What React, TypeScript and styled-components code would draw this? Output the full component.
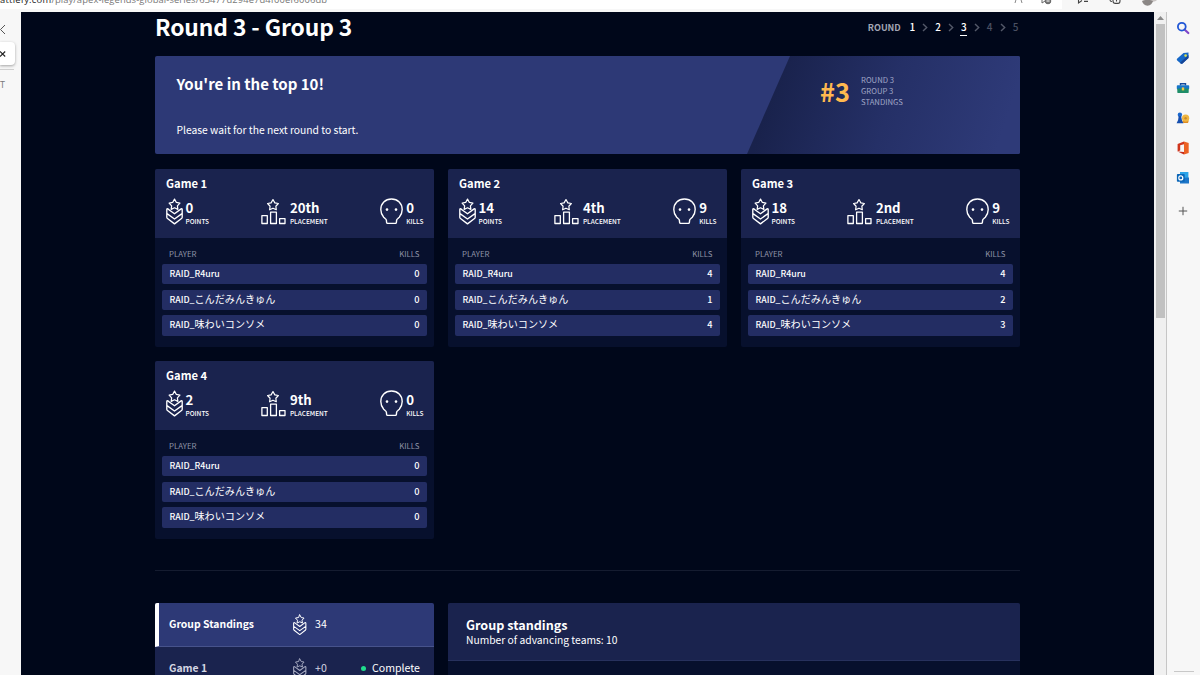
import React from "react";
import styled, { createGlobalStyle } from "styled-components";

const GlobalStyle = createGlobalStyle`
  * { box-sizing: border-box; }
  html, body { margin: 0; padding: 0; }
  body {
    width: 1200px;
    height: 675px;
    overflow: hidden;
    background: #f7f7f7;
    font-family: "Noto Sans CJK JP", "Noto Sans", sans-serif;
    color: #fff;
  }
`;

const Browser = styled.div`
  width: 1200px;
  height: 675px;
  display: flex;
  flex-direction: column;
  overflow: hidden;
`;

const TopBar = styled.div`
  height: 12px;
  flex: none;
  display: flex;
  overflow: hidden;
  background: #f7f7f7;
`;

const AddressBar = styled.div`
  width: 1062px;
  height: 9px;
  display: flex;
  justify-content: space-between;
  align-items: flex-end;
  background: #fff;
  overflow: hidden;
`;

const Url = styled.div`
  font: 9.4px/14px "Open Sans", sans-serif;
  letter-spacing: 0.1px;
  color: #777;
  height: 14px;
  margin: 0 0 2px -6px;
  white-space: nowrap;
  b { font-weight: 400; color: #222; letter-spacing: 0.25px; }
`;

const AddressIcons = styled.div`
  display: flex;
  gap: 18px;
  padding-right: 9px;
  height: 9px;
`;

const ToolIcons = styled.div`
  display: flex;
  gap: 20px;
  padding-left: 14px;
  height: 9px;
`;

const Body = styled.div`
  flex: 1;
  min-height: 0;
  display: flex;
`;

const TabStrip = styled.div`
  width: 21px;
  flex: none;
  display: flex;
  flex-direction: column;
  background: #f7f7f7;
  color: #555;
  overflow: hidden;
`;

const Collapse = styled.div`
  height: 30px;
  padding-top: 12px;
  svg { display: block; }
`;

const ActiveTab = styled.div`
  width: 15px;
  height: 23px;
  display: flex;
  align-items: center;
  background: #fff;
  border-radius: 0 4px 4px 0;
  box-shadow: 0 1px 3px rgba(0, 0, 0, 0.35);
`;

const TabLetter = styled.div`
  margin-top: 4px;
  width: 14px;
  padding-top: 9px;
  border-top: 1px solid #cfcfcf;
  font: 9px/12px "Open Sans", sans-serif;
  color: #777;
`;

const Page = styled.main`
  width: 1133px;
  flex: none;
  background: #00071a;
  overflow: hidden;
`;

const Content = styled.div`
  width: 865px;
  margin-left: 134px;
`;

const TitleRow = styled.header`
  height: 44px;
  display: flex;
  justify-content: space-between;
  align-items: flex-start;
`;

const Title = styled.h1`
  margin: 0;
  font-size: 22.8px;
  font-weight: 700;
  line-height: 30px;
  letter-spacing: -0.1px;
  white-space: nowrap;
`;

const Rounds = styled.nav`
  display: flex;
  align-items: center;
  height: 20px;
  margin: 5px 1px 0 0;
  font-size: 10px;
`;

const RoundsLabel = styled.span`
  font-weight: 700;
  font-size: 9px;
  width: 41px;
  color: #a3a6b4;
`;

const RoundNumber = styled.span<{ $state?: "active" | "future" }>`
  width: 7px;
  text-align: center;
  line-height: 14px;
  height: 15px;
  font-weight: 500;
  color: ${(p) => (p.$state === "future" ? "#4a5062" : "#fff")};
  box-shadow: ${(p) => (p.$state === "active" ? "0 1px 0 #fff" : "none")};
`;

const RoundGap = styled.span`
  width: 18.8px;
  display: flex;
  justify-content: center;
`;

const Banner = styled.section`
  height: 98px;
  display: flex;
  justify-content: space-between;
  background: #2d3976;
  border-radius: 2px;
  overflow: hidden;
`;

const BannerText = styled.div`
  padding: 16px 0 0 21.5px;
`;

const BannerTitle = styled.h2`
  margin: 0;
  font-size: 15px;
  font-weight: 700;
  line-height: 24px;
`;

const BannerNote = styled.p`
  margin: 25px 0 0;
  font-size: 10.3px;
  line-height: 18px;
`;

const RankPanel = styled.div`
  width: 273px;
  display: flex;
  padding: 19px 0 0 73px;
  clip-path: polygon(43px 0, 100% 0, 100% 100%, 0 100%);
  background: linear-gradient(108deg, #19224c 12%, #253067 52%, #2e3a78 92%);
`;

const Rank = styled.div`
  width: 41px;
  font-size: 25.4px;
  font-weight: 700;
  line-height: 32px;
  color: #ffb94f;
`;

const RankLabel = styled.div`
  font-size: 7.7px;
  line-height: 10.9px;
  color: #a0a6c6;
`;

const Games = styled.section`
  display: grid;
  grid-template-columns: repeat(3, 279px);
  gap: 14.4px 14px;
  margin-top: 15px;
`;

const Card = styled.article`
  height: 177.6px;
  background: #07102d;
  border-radius: 2px;
  overflow: hidden;
`;

const CardHeader = styled.div`
  height: 69px;
  padding: 6px 10.5px 0 10.5px;
  background: #1a234e;
`;

const CardTitle = styled.h3`
  margin: 0 0 0 0.5px;
  font-size: 11.2px;
  font-weight: 700;
  line-height: 16px;
`;

const Stats = styled.div`
  display: flex;
  justify-content: space-between;
  margin-top: 7px;
`;

const Stat = styled.div<{ $gap: number }>`
  display: flex;
  gap: ${(p) => p.$gap}px;
`;

const StatText = styled.div`
  padding-top: 2px;
`;

const StatValue = styled.div`
  font-size: 13.2px;
  font-weight: 700;
  line-height: 15px;
`;

const StatLabel = styled.div`
  font-size: 6.5px;
  font-weight: 500;
  line-height: 10px;
  margin-top: 1px;
`;

const Players = styled.div`
  padding: 9px 7px 0;
`;

const PlayerHead = styled.div`
  display: flex;
  justify-content: space-between;
  padding: 0 7.5px 0 7px;
  font-size: 7.8px;
  line-height: 14px;
  color: #8f93a6;
`;

const PlayerRow = styled.div`
  display: flex;
  align-items: baseline;
  justify-content: space-between;
  height: 20.5px;
  margin: 2.7px 0 5.4px;
  padding: 0 7.5px;
  line-height: 19.4px;
  font-size: 9.2px;
  font-weight: 500;
  background: #232d63;
  border-radius: 2px;
  & + & { margin-top: 0; }
`;

const PlayerName = styled.span`
  font-size: 8.8px;
`;

const Kana = styled.span`
  font-size: 10.1px;
  line-height: 1;
  font-weight: 400;
`;

const Divider = styled.hr`
  height: 1px;
  margin: 31.4px 0 32px;
  border: 0;
  background: #151c30;
`;

const Lower = styled.section`
  display: flex;
  gap: 14px;
`;

const Menu = styled.div`
  width: 279px;
  border-radius: 2px 2px 0 0;
  overflow: hidden;
`;

const MenuItem = styled.div<{ $active?: boolean }>`
  display: grid;
  grid-template-columns: 124px 22px 44px 1fr;
  align-items: center;
  height: 44px;
  padding: 0 14px 0 ${(p) => (p.$active ? 10 : 14)}px;
  background: ${(p) => (p.$active ? "#2d3976" : "#1a234e")};
  border-left: ${(p) => (p.$active ? "4px solid #fff" : "0")};
  border-bottom: 1px solid #47538c;
  font-size: 10.6px;
  line-height: 20px;
  color: ${(p) => (p.$active ? "#fff" : "#d3d5e2")};
  white-space: nowrap;
`;

const MenuName = styled.span`
  font-size: 10.4px;
  font-weight: 700;
`;

const Status = styled.span`
  display: flex;
  align-items: center;
  justify-content: flex-end;
  gap: 6px;
  color: #fff;
  &::before {
    content: "";
    width: 5px;
    height: 5px;
    border-radius: 50%;
    background: #1fdc8c;
  }
`;

const Standings = styled.div`
  width: 572px;
  height: 100px;
  background: #07102d;
  border-radius: 2px 2px 0 0;
  overflow: hidden;
`;

const StandingsHeader = styled.div`
  height: 58px;
  padding: 13px 18px 0;
  background: #1a234e;
  border-bottom: 1px solid #27315d;
`;

const StandingsTitle = styled.h2`
  margin: 0;
  font-size: 12.6px;
  font-weight: 700;
  line-height: 18px;
`;

const StandingsNote = styled.div`
  font-size: 10.3px;
  line-height: 11px;
`;

const Scrollbar = styled.div`
  width: 13px;
  flex: none;
  display: flex;
  flex-direction: column;
  align-items: center;
  background: #f0f0f0;
  border-right: 1px solid #c6c6c6;
`;

const ScrollUp = styled.div`
  height: 12px;
  display: flex;
  align-items: center;
`;

const Thumb = styled.div`
  width: 9px;
  height: 294px;
  background: #c1c1c1;
`;

const SideBar = styled.aside`
  flex: 1;
  display: flex;
  flex-direction: column;
  justify-content: space-between;
  align-items: center;
  background: #f7f7f7;
`;

const SideIcons = styled.div`
  display: flex;
  flex-direction: column;
  align-items: center;
  gap: 16.1px;
  padding: 9px 1px 0 0;
  svg { display: block; }
  svg:last-child { margin-top: 2.5px; }
`;

const SideRule = styled.div`
  width: 20px;
  height: 1px;
  margin-bottom: 3px;
  background: #c8c8c8;
`;

const star = "M9 1 L11 4.6 L14.8 5.3 L12.1 8.2 L12.6 12 L9 10.3 L5.4 12 L5.9 8.2 L3.2 5.3 L7 4.6 Z";

function PointsIcon({ size = 17, color = "#fff" }: { size?: number; color?: string }) {
  return (
    <svg width={size} height={(size * 27) / 17} viewBox="0 0 17 27" fill="none" stroke={color} strokeWidth="1.35" strokeLinejoin="round" strokeLinecap="round">
      <path d={star} transform="translate(.15 .2) scale(.93)" />
      <path d="M3.6 12.2 L1.9 10.9 Q.8 10.4 .8 11.7 V19.2 Q.8 20 1.5 20.5 L8.5 25.9 L15.5 20.5 Q16.2 20 16.2 19.2 V11.7 Q16.2 10.4 15.1 10.9 L8.5 15.8 L3.6 12.2 M1 15.6 L8.5 21 L16 15.6" />
    </svg>
  );
}

function PlacementIcon() {
  return (
    <svg width="25" height="27" viewBox="0 0 25 27" fill="none" stroke="#fff" strokeWidth="1.3" strokeLinejoin="round">
      <path d={star} transform="translate(3.6 .6) scale(.93)" />
      <rect x="0.9" y="17.6" width="5.4" height="7.9" />
      <rect x="9.6" y="14.2" width="5.8" height="11.3" />
      <rect x="18.6" y="20.6" width="5.4" height="4.9" />
    </svg>
  );
}

function SkullIcon() {
  return (
    <svg width="23" height="27" viewBox="0 0 23 27" fill="none" stroke="#fff" strokeWidth="1.4" strokeLinejoin="round">
      <path d="M7.6 25.4 Q6.7 25.4 6.6 24.4 L6.4 22.4 Q6.3 21.4 5.4 20.7 L3.7 19.2 C1.8 17 .8 14.6 .8 11.5 C.8 5.2 5.2 1 11.5 1 S22.2 5.2 22.2 11.5 C22.2 14.6 21.2 17 19.3 19.2 L17.6 20.7 Q16.7 21.4 16.6 22.4 L16.4 24.4 Q16.3 25.4 15.4 25.4 Z" />
      <circle cx="7" cy="11.6" r="1.3" fill="#fff" stroke="none" />
      <circle cx="16" cy="11.6" r="1.3" fill="#fff" stroke="none" />
    </svg>
  );
}

interface Game {
  name: string;
  points: number;
  place: string;
  total: number;
  kills: number[];
}

const team = "RAID_";

const players = [
  { latin: "R4uru", kana: "" },
  { latin: "", kana: "こんだみんきゅん" },
  { latin: "", kana: "味わいコンソメ" },
];

const games: Game[] = [
  { name: "Game 1", points: 0, place: "20th", total: 0, kills: [0, 0, 0] },
  { name: "Game 2", points: 14, place: "4th", total: 9, kills: [4, 1, 4] },
  { name: "Game 3", points: 18, place: "2nd", total: 9, kills: [4, 2, 3] },
  { name: "Game 4", points: 2, place: "9th", total: 0, kills: [0, 0, 0] },
];

function StatBlock({ icon, value, label, gap }: { icon: React.ReactNode; value: React.ReactNode; label: string; gap: number }) {
  return (
    <Stat $gap={gap}>
      {icon}
      <StatText>
        <StatValue>{value}</StatValue>
        <StatLabel>{label}</StatLabel>
      </StatText>
    </Stat>
  );
}

function GameCard({ game }: { game: Game }) {
  return (
    <Card>
      <CardHeader>
        <CardTitle>{game.name}</CardTitle>
        <Stats>
          <StatBlock icon={<PointsIcon />} value={game.points} label="POINTS" gap={3} />
          <StatBlock icon={<PlacementIcon />} value={game.place} label="PLACEMENT" gap={3.5} />
          <StatBlock icon={<SkullIcon />} value={game.total} label="KILLS" gap={3} />
        </Stats>
      </CardHeader>
      <Players>
        <PlayerHead>
          <span>PLAYER</span>
          <span>KILLS</span>
        </PlayerHead>
        {players.map(({ latin, kana }, i) => (
          <PlayerRow key={latin + kana}>
            <PlayerName>
              {team + latin}
              {kana && <Kana>{kana}</Kana>}
            </PlayerName>
            <span>{game.kills[i]}</span>
          </PlayerRow>
        ))}
      </Players>
    </Card>
  );
}

function RoundSteps() {
  return (
    <Rounds>
      <RoundsLabel>ROUND</RoundsLabel>
      {[1, 2, 3, 4, 5].map((n) => (
        <React.Fragment key={n}>
          {n > 1 && (
            <RoundGap>
              <svg width="6" height="9" viewBox="0 0 6 9" fill="none" stroke="#535969" strokeWidth="1.4">
                <path d="M1 1 L4.7 4.5 L1 8" />
              </svg>
            </RoundGap>
          )}
          <RoundNumber $state={n === 3 ? "active" : n > 3 ? "future" : undefined}>{n}</RoundNumber>
        </React.Fragment>
      ))}
    </Rounds>
  );
}

function BrowserSideBar() {
  return (
    <SideBar>
      <SideIcons>
        <svg width="14" height="14" viewBox="0 0 14 14" fill="none">
          <path d="M8.5 8.5 L12.3 12" stroke="#8047c9" strokeWidth="2.2" strokeLinecap="round" />
          <circle cx="5.8" cy="5.7" r="3.9" stroke="#2157d6" strokeWidth="1.8" />
        </svg>
        <svg width="14" height="14" viewBox="0 0 14 14">
          <path d="M1 7.8 L7.5 2 L12.5 1.5 V7 L6.5 12.5 Q5.5 13.2 4.7 12.4 L1.2 9.5 Q.4 8.6 1 7.8Z" fill="#1668c7" />
          <path d="M6.5 12.5 L12.5 7 V4 L4 11.8 L4.7 12.4 Q5.5 13.2 6.5 12.5Z" fill="#174596" />
          <circle cx="9.6" cy="4.6" r="1.3" fill="#d6dc4d" />
        </svg>
        <svg width="14" height="14" viewBox="0 0 14 14">
          <path d="M4.5 4.5 V2.8 H9.5 V4.5" fill="none" stroke="#174b9c" strokeWidth="1.4" />
          <rect x=".8" y="4.2" width="12.4" height="4" rx=".8" fill="#1675c9" />
          <rect x="1.3" y="7.6" width="11.4" height="4.3" rx=".6" fill="#1f8e69" />
          <rect x="5.8" y="6.4" width="2.4" height="3" fill="#f1c644" />
        </svg>
        <svg width="14" height="14" viewBox="0 0 14 14">
          <circle cx="3.9" cy="3.8" r="2.2" fill="#1a67cd" />
          <path d="M2.7 5 H5.1 L5.9 9 L7.5 12.2 H.6 L2.1 9Z" fill="#164eae" />
          <path d="M6.5 10 L12.8 9.6 L12 12 H7.2Z" fill="#dc8c25" />
          <circle cx="9.6" cy="7.2" r="3.6" fill="#f0b640" />
          <circle cx="9.6" cy="7.2" r="1.2" fill="#c98a2c" />
        </svg>
        <svg width="14" height="14" viewBox="0 0 14 14">
          <path d="M8 .6 L1.6 3 V10.5 L4.2 9.6 V4.2 L8 3.2Z" fill="#cf351d" />
          <path d="M8 .6 L12.7 2 V12 L8 13.5Z" fill="#ec6224" />
          <path d="M1.6 10.5 L8 11 V13.5Z" fill="#c72c1b" />
        </svg>
        <svg width="14" height="14" viewBox="0 0 14 14">
          <rect x="4" y="1" width="8.4" height="8" fill="#2aa3e8" />
          <path d="M4 7 L13 6.4 V12.6 H4Z" fill="#1d76c8" />
          <rect x=".9" y="3" width="7.8" height="7.8" rx=".8" fill="#0a66b8" />
          <circle cx="4.8" cy="6.9" r="2" fill="none" stroke="#fff" strokeWidth="1.2" />
        </svg>
        <svg width="14" height="14" viewBox="0 0 14 14" stroke="#555" strokeWidth="1">
          <path d="M7 2.8 V11.2 M2.8 7 H11.2" />
        </svg>
      </SideIcons>
      <SideRule />
    </SideBar>
  );
}

export default function App() {
  return (
    <>
      <GlobalStyle />
      <Browser>
        <TopBar>
          <AddressBar>
            <Url>
              <b>battlefy.com</b>/play/apex-legends-global-series/63477d294e7d4f00ef6006db
            </Url>
            <AddressIcons>
              <svg width="9" height="9" viewBox="0 0 9 9" fill="none" stroke="#888">
                <path d="M1 3 L2.5 -2 M8 3 L6.5 -2" />
              </svg>
              <svg width="12" height="9" viewBox="0 0 12 9" fill="none" stroke="#666">
                <path d="M1 3 V-1 M1 3 L4 1" />
                <circle cx="7" cy="1" r="2.8" fill="#777" />
                <path d="M5.5 1 H8.5" stroke="#fff" />
              </svg>
            </AddressIcons>
          </AddressBar>
          <ToolIcons>
            <svg width="13" height="9" viewBox="0 0 13 9" fill="none" stroke="#444" strokeWidth="1.1">
              <path d="M2.5 -1 V3 L6 .5 M8 1.4 H12" />
            </svg>
            <svg width="13" height="9" viewBox="0 0 13 9" fill="none" stroke="#444" strokeWidth="1.1">
              <path d="M1 0 Q1 1.5 3 1.5 M4 -1 V1 Q4 3.4 6.5 3.4 H9 Q11 3.4 11 1 V-1 M7.5 -1 V1.5" />
            </svg>
            <svg width="16" height="9" viewBox="0 0 16 9">
              <path d="M0 0 Q3 2 8 2 T15 0Z" fill="#c9c5c3" />
              <path d="M0 1 Q6 -1.4 11 1 Q10 5.2 5.5 5.7 Q1 5.2 0 1Z" fill="#8b8785" />
            </svg>
          </ToolIcons>
        </TopBar>
        <Body>
          <TabStrip>
            <Collapse>
              <svg width="6" height="11" viewBox="0 0 6 11" fill="none" stroke="#555">
                <path d="M5 1 L.5 5.5 L5 10" />
              </svg>
            </Collapse>
            <ActiveTab>
              <svg width="7" height="8" viewBox="0 0 7 8" fill="none" stroke="#222" strokeWidth="1.1">
                <path d="M0 1.5 L5.2 6.5 M5.2 1.5 L0 6.5" />
              </svg>
            </ActiveTab>
            <TabLetter>T</TabLetter>
          </TabStrip>
          <Page>
            <Content>
              <TitleRow>
                <Title>Round 3 - Group 3</Title>
                <RoundSteps />
              </TitleRow>
              <Banner>
                <BannerText>
                  <BannerTitle>You're in the top 10!</BannerTitle>
                  <BannerNote>Please wait for the next round to start.</BannerNote>
                </BannerText>
                <RankPanel>
                  <Rank>#3</Rank>
                  <RankLabel>
                    ROUND 3<br />
                    GROUP 3<br />
                    STANDINGS
                  </RankLabel>
                </RankPanel>
              </Banner>
              <Games>
                {games.map((game) => (
                  <GameCard key={game.name} game={game} />
                ))}
              </Games>
              <Divider />
              <Lower>
                <Menu>
                  <MenuItem $active>
                    <MenuName>Group Standings</MenuName>
                    <PointsIcon size={13.5} />
                    <span>34</span>
                  </MenuItem>
                  <MenuItem>
                    <MenuName>Game 1</MenuName>
                    <PointsIcon size={13.5} color="#a5a9c0" />
                    <span>+0</span>
                    <Status>Complete</Status>
                  </MenuItem>
                </Menu>
                <Standings>
                  <StandingsHeader>
                    <StandingsTitle>Group standings</StandingsTitle>
                    <StandingsNote>Number of advancing teams: 10</StandingsNote>
                  </StandingsHeader>
                </Standings>
              </Lower>
            </Content>
          </Page>
          <Scrollbar>
            <ScrollUp>
              <svg width="7" height="4" viewBox="0 0 7 4">
                <path d="M0 4 L3.5 0 L7 4Z" fill="#8a8a8a" />
              </svg>
            </ScrollUp>
            <Thumb />
          </Scrollbar>
          <BrowserSideBar />
        </Body>
      </Browser>
    </>
  );
}
